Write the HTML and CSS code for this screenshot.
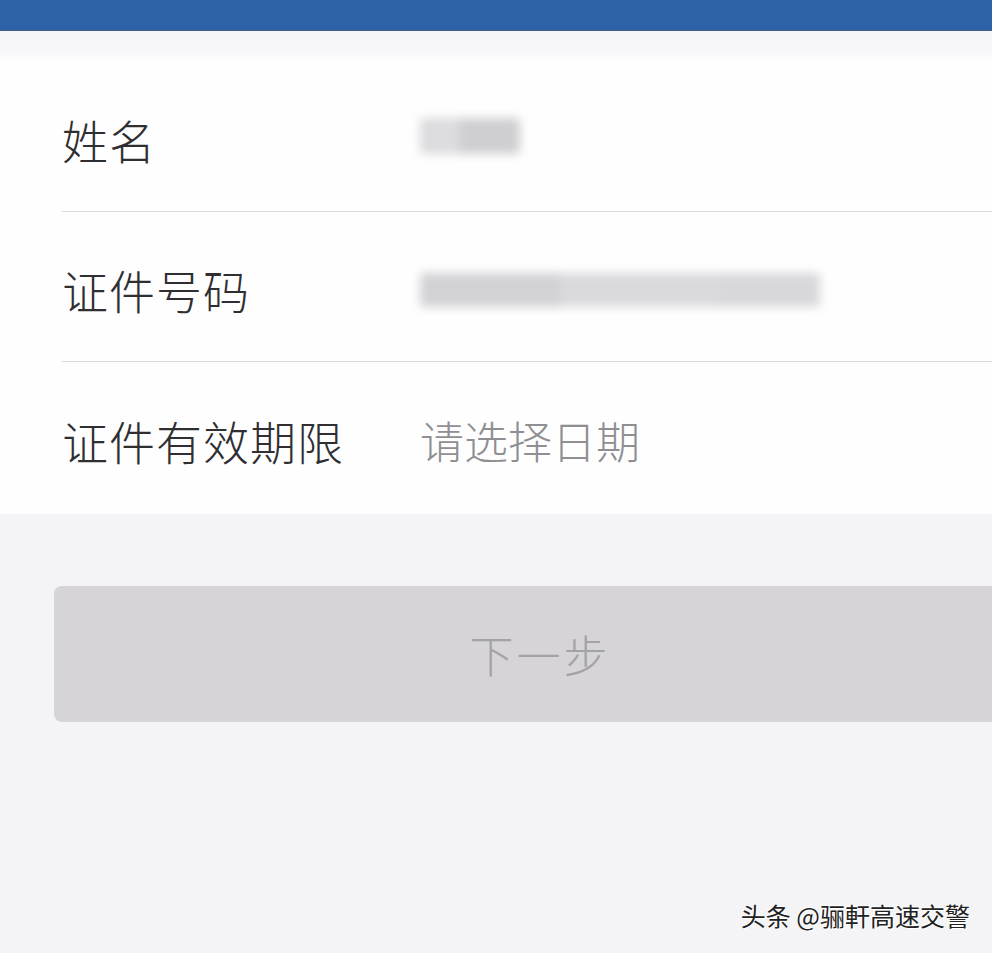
FILE: index.html
```html
<!DOCTYPE html>
<html lang="zh">
<head>
<meta charset="utf-8">
<link rel="stylesheet" href="styles.css">
</head>
<body>
<div class="topbar"></div>
<div class="gap"></div>
<div class="card">
  <div class="row">
    <span class="label">姓名</span>
    <span class="value"><span class="blur blur-name"></span></span>
  </div>
  <div class="row">
    <span class="label">证件号码</span>
    <span class="value"><span class="blur blur-id"></span></span>
  </div>
  <div class="row last">
    <span class="label">证件有效期限</span>
    <span class="value placeholder">请选择日期</span>
  </div>
</div>
<div class="actions">
  <div class="btn">下一步</div>
</div>
<div class="watermark">头条 @骊軒高速交警</div>
</body>
</html>
```
FILE: styles.css
```css
html, body {
  margin: 0;
  padding: 0;
}
body {
  width: 992px;
  height: 953px;
  overflow: hidden;
  background: #f4f3f6;
  font-family: "Noto Sans CJK SC", "Noto Sans", sans-serif;
  position: relative;
}
.topbar {
  height: 30px;
  background: #2d62a6;
  border-bottom: 1px solid #3f5f86;
}
.gap {
  height: 31px;
  background: linear-gradient(#f3f6f8, #f7f6f8 60%, #fdfdfe);
}
.card {
  background: #fefefe;
  padding-left: 62px;
}
.row {
  display: flex;
  align-items: center;
  height: 149px;
  border-bottom: 1px solid #d9d8dc;
}
.row.last {
  border-bottom: none;
  height: 152px;
}
.label {
  width: 358px;
  font-size: 46px;
  font-weight: 300;
  color: #2f2f31;
  letter-spacing: 1px;
  padding-top: 4px;
}
.value {
  font-size: 44px;
  font-weight: 300;
  padding-top: 4px;
}
.placeholder {
  color: #8f8e92;
}
.blur {
  display: block;
  background: #d3d2d5;
  filter: blur(5px);
  border-radius: 4px;
}
.blur-name {
  width: 100px;
  height: 36px;
  margin-top: -6px;
  background: linear-gradient(90deg, #dcdbde 0 40%, #cfced1 40% 100%);
}
.blur-id {
  width: 400px;
  height: 34px;
  margin-top: 2px;
  background: linear-gradient(90deg, #d2d1d4 0 35%, #dad9dc 35% 75%, #d8d7da 75% 100%);
}
.actions {
  padding: 72px 0 0 54px;
}
.btn {
  height: 136px;
  background: #d6d4d7;
  border-radius: 8px 0 0 8px;
  display: flex;
  align-items: center;
  justify-content: center;
  padding-left: 24px;
  font-size: 44px;
  font-weight: 300;
  color: #a3a2a6;
  letter-spacing: 3px;
  margin-right: -10px;
}
.watermark {
  position: absolute;
  right: 22px;
  bottom: 20px;
  font-size: 25px;
  color: #222;
  text-shadow: 1px 1px 0 #fff, -1px -1px 0 #fff;
}
```
